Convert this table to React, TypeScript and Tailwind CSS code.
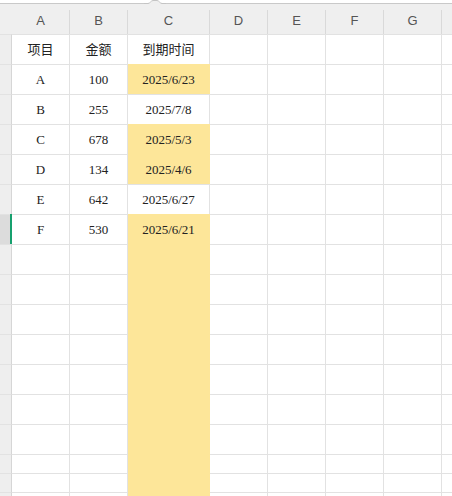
import React from 'react';

type Row = {
  cells: string[];
  yellow: boolean;
  active?: boolean;
  short?: boolean;
};

const HEADS = ['A', 'B', 'C', 'D', 'E', 'F', 'G'];

const ROWS: Row[] = [
  { cells: ['项目', '金额', '到期时间'], yellow: false },
  { cells: ['A', '100', '2025/6/23'], yellow: true },
  { cells: ['B', '255', '2025/7/8'], yellow: false },
  { cells: ['C', '678', '2025/5/3'], yellow: true },
  { cells: ['D', '134', '2025/4/6'], yellow: true },
  { cells: ['E', '642', '2025/6/27'], yellow: false },
  { cells: ['F', '530', '2025/6/21'], yellow: true, active: true },
  ...Array.from({ length: 7 }, () => ({ cells: [], yellow: true })),
  ...Array.from({ length: 3 }, () => ({ cells: [], yellow: true, short: true })),
];

// column widths incl. right grid line
const WIDTHS = ['w-[58px]', 'w-[58px]', 'w-[82px]', 'w-[58px]', 'w-[58px]', 'w-[58px]', 'w-[58px]'];

export default function App() {
  return (
    <div className="relative h-[496px] w-[452px] overflow-hidden bg-white pt-[3px] font-['Liberation_Serif','Noto_Sans_CJK_SC',serif] text-[13px] text-[#222]">
      {/* little tab arrow on the top edge */}
      <svg className="absolute left-[144px] top-0" width="22" height="5" viewBox="0 0 22 5">
        <path d="M0 3.5 H4 C6 3.5 7 0.5 9 0.5 H13 C15 0.5 16 3.5 18 3.5 H22 V5 H0 Z" fill="#efefef" />
        <path d="M0 3.5 H4 C6 3.5 7 0.5 9 0.5 H13 C15 0.5 16 3.5 18 3.5 H22" fill="none" stroke="#c4c4c4" />
      </svg>

      {/* column letters */}
      <div className="h-[31px] border-t border-[#c9c9c9] bg-[#efefef] font-['Liberation_Sans',sans-serif] text-[13px] text-[#555]">
        <div className="h-[6px]" />
        <div className="flex h-6">
          <div className="w-3 shrink-0" />
          {HEADS.map((h, i) => (
            <div
              key={h}
              className={`${WIDTHS[i]} flex shrink-0 items-center justify-center border-r border-[#d9d9d9] pb-[2px]`}
            >
              {h}
            </div>
          ))}
          <div className="flex-1" />
        </div>
      </div>

      {ROWS.map((r, ri) => (
        <div key={ri} className={`flex ${r.short ? 'h-[19px]' : 'h-[30px]'}`}>
          <div
            className={`relative w-3 shrink-0 border-r border-t border-r-[#d6d6d6] border-t-[#e2e2e2] ${
              r.active ? 'bg-[#dcdcdc]' : 'bg-[#eeeeee]'
            }`}
          >
            {r.active && <div className="absolute -bottom-0 right-[-1px] top-[-1px] w-[2px] bg-[#16a06e]" />}
          </div>
          {WIDTHS.map((w, ci) => {
            const yellow = ci === 2 && r.yellow;
            return (
              <div
                key={ci}
                className={`${w} flex shrink-0 items-center justify-center border-r border-t ${
                  yellow ? 'border-[#fde699] bg-[#fde699]' : 'border-[#e2e2e2] bg-white'
                }`}
              >
                {r.cells[ci] ?? ''}
              </div>
            );
          })}
          <div className="flex-1 border-t border-[#e2e2e2]" />
        </div>
      ))}
    </div>
  );
}
